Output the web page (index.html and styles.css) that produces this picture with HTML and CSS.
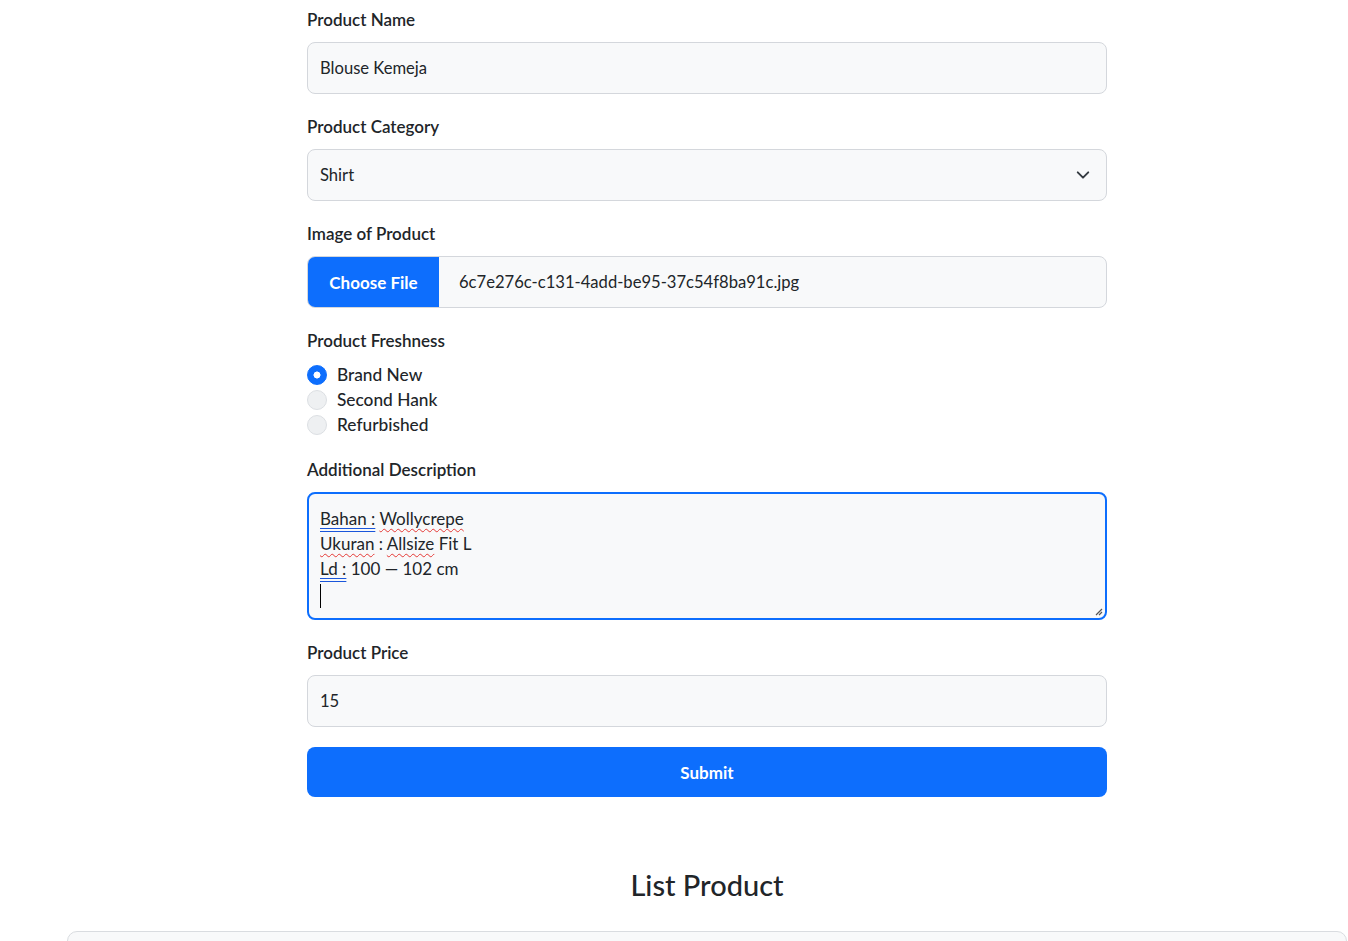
FILE: index.html
```html
<!DOCTYPE html>
<html lang="en">
<head>
<meta charset="utf-8">
<title>Add Product</title>
<link rel="stylesheet" href="styles.css">
</head>
<body>
<div class="page">
  <form class="form">
    <div class="field">
      <label class="label">Product Name</label>
      <div class="control">Blouse Kemeja</div>
    </div>
    <div class="field">
      <label class="label">Product Category</label>
      <div class="control select">
        <span>Shirt</span>
        <svg class="chev" width="14" height="14" viewBox="0 0 16 16"><path d="M2 5l6 6 6-6" fill="none" stroke="#343a40" stroke-width="2.2" stroke-linecap="round" stroke-linejoin="round"/></svg>
      </div>
    </div>
    <div class="field">
      <label class="label">Image of Product</label>
      <div class="control file">
        <span class="file-btn">Choose File</span>
        <span class="file-name">6c7e276c-c131-4add-be95-37c54f8ba91c.jpg</span>
      </div>
    </div>
    <div class="field">
      <label class="label">Product Freshness</label>
      <div class="radios">
        <div class="radio"><span class="dot checked"></span><span>Brand New</span></div>
        <div class="radio"><span class="dot"></span><span>Second Hank</span></div>
        <div class="radio"><span class="dot"></span><span>Refurbished</span></div>
      </div>
    </div>
    <div class="field">
      <label class="label">Additional Description</label>
      <div class="control area">
        <div class="line"><span class="gram">Bahan :</span> <span class="spell">Wollycrepe</span></div>
        <div class="line"><span class="spell">Ukuran</span> : <span class="spell">Allsize</span> Fit L</div>
        <div class="line"><span class="gram">Ld :</span> 100 — 102 cm</div>
        <div class="line"><span class="caret"></span></div>
        <svg class="grip" width="10" height="10" viewBox="0 0 10 10"><path d="M9 3L3 9M9 6L6 9" stroke="#555" stroke-width="1.2"/></svg>
      </div>
    </div>
    <div class="field">
      <label class="label">Product Price</label>
      <div class="control">15</div>
    </div>
    <button type="button" class="submit">Submit</button>
  </form>
  <h2 class="title">List Product</h2>
  <div class="card"></div>
</div>
</body>
</html>
```
FILE: styles.css
```css
* { box-sizing: border-box; }
body {
  margin: 0;
  background: #fff;
  font-family: "Lato", "Open Sans", sans-serif;
  color: #212529;
  font-size: 16px;
}
.page {
  width: 1280px;
  margin-left: 67px;
}
.form {
  width: 800px;
  margin: 0 auto;
  padding-top: 7px;
}
.field {
  margin-bottom: 20px;
}
.label {
  display: block;
  font-weight: 600;
  font-size: 17px;
  line-height: 24px;
  padding-top: 1px;
  margin-bottom: 10px;
}
.control {
  height: 52px;
  border: 1px solid #d4d7dc;
  border-radius: 8px;
  background: #f8f9fa;
  padding: 0 12px;
  display: flex;
  align-items: center;
  font-size: 16.6px;
}
.select {
  justify-content: space-between;
  padding-right: 16px;
}
.file {
  padding: 0;
  overflow: hidden;
}
.file-btn {
  background: #0d6efd;
  color: #fff;
  font-weight: 700;
  font-size: 17px;
  height: 100%;
  width: 131px;
  display: flex;
  align-items: center;
  justify-content: center;
}
.file-name {
  padding-left: 20px;
  font-size: 16.6px;
}
.radios {
  display: flex;
  flex-direction: column;
  margin-top: -1px;
}
.radio {
  display: flex;
  align-items: center;
  height: 25px;
  font-size: 17.3px;
  font-weight: 500;
}
.dot {
  width: 20px;
  height: 20px;
  border-radius: 50%;
  border: 1px solid #dcdfe3;
  background: #eef0f2;
  margin-right: 10px;
  flex: none;
}
.dot.checked {
  border-color: #0d6efd;
  background: radial-gradient(circle, #fff 0 3.2px, #0d6efd 3.8px);
}
.area {
  height: 128px;
  border: 2px solid #0d6efd;
  display: block;
  padding: 12px 11px;
  position: relative;
  font-size: 17px;
}
.line {
  line-height: 25px;
  height: 25px;
}
.gram {
  text-decoration: underline double #1a56db;
  text-underline-offset: 3px;
}
.spell {
  text-decoration: underline wavy #e53935;
  text-decoration-thickness: 1px;
  text-underline-offset: 3px;
}
.caret {
  display: inline-block;
  width: 1px;
  height: 24px;
  background: #000;
  vertical-align: middle;
}
.grip {
  position: absolute;
  right: 2px;
  bottom: 2px;
}
.submit {
  display: block;
  width: 800px;
  height: 50px;
  border: none;
  border-radius: 8px;
  background: #0d6efd;
  color: #fff;
  font-family: inherit;
  font-size: 17px;
  font-weight: 700;
  margin-top: 0;
}
.title {
  text-align: center;
  font-weight: 500;
  font-size: 29px;
  line-height: 36px;
  margin: 70px 0 0;
  height: 64px;
}
.card {
  height: 60px;
  border: 1px solid #d9dce0;
  border-radius: 10px;
  background: #f8f9fa;
}
```
